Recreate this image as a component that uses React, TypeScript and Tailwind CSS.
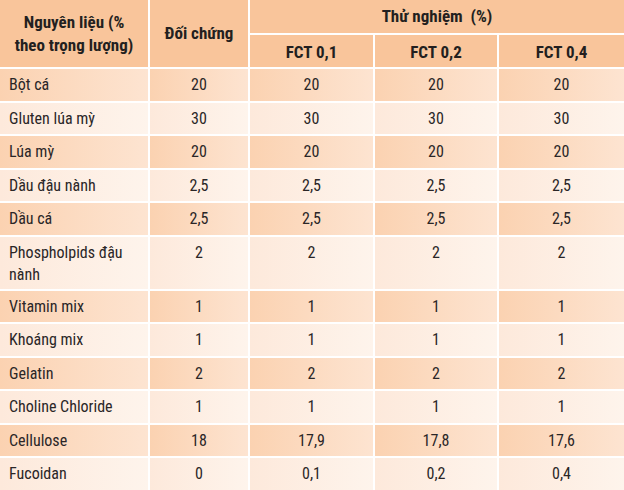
import React from 'react';

const rows: { name: string; values: string[]; tall?: boolean }[] = [
  { name: 'Bột cá', values: ['20', '20', '20', '20'] },
  { name: 'Gluten lúa mỳ', values: ['30', '30', '30', '30'] },
  { name: 'Lúa mỳ', values: ['20', '20', '20', '20'] },
  { name: 'Dầu đậu nành', values: ['2,5', '2,5', '2,5', '2,5'] },
  { name: 'Dầu cá', values: ['2,5', '2,5', '2,5', '2,5'] },
  { name: 'Phospholpids đậu nành', values: ['2', '2', '2', '2'], tall: true },
  { name: 'Vitamin mix', values: ['1', '1', '1', '1'] },
  { name: 'Khoáng mix', values: ['1', '1', '1', '1'] },
  { name: 'Gelatin', values: ['2', '2', '2', '2'] },
  { name: 'Choline Chloride', values: ['1', '1', '1', '1'] },
  { name: 'Cellulose', values: ['18', '17,9', '17,8', '17,6'] },
  { name: 'Fucoidan', values: ['0', '0,1', '0,2', '0,4'] },
];

export default function App() {
  return (
    <div className="w-[624px] h-[490px] bg-white text-[#231f20] font-['Roboto',sans-serif] font-stretch-condensed">
      {/* header */}
      <div className="grid grid-cols-[148px_98px_123px_122px_1fr] gap-[2px] grid-rows-[32.5px_32.5px] text-[17px] font-bold">
        <div className="row-span-2 bg-[#f9c59b] flex items-center justify-center text-center leading-[23px] px-2">
          Nguyên liệu (%
          <br />
          theo trọng lượng)
        </div>
        <div className="row-span-2 bg-[#f9c59b] flex items-center justify-center">Đối chứng</div>
        <div className="col-span-3 bg-[#f9c59b] flex items-center justify-center">Thử nghiệm&nbsp;&nbsp;(%)</div>
        <div className="bg-[#f9c59b] flex items-center justify-center pt-[4px]">FCT 0,1</div>
        <div className="bg-[#f9c59b] flex items-center justify-center pt-[4px]">FCT 0,2</div>
        <div className="bg-[#f9c59b] flex items-center justify-center pt-[4px]">FCT 0,4</div>
      </div>

      {/* body */}
      <div className="mt-[2px] flex flex-col gap-[2px] text-[16px] text-[#2a2627]">
        {rows.map((r, i) => {
          const cell =
            i % 2 === 0
              ? 'bg-linear-to-r from-[#fbd2b1] to-[#fde4d1]'
              : 'bg-linear-to-r from-[#fde9db] to-[#fef4ec]';
          return (
            <div
              key={r.name}
              className={`grid grid-cols-[148px_98px_123px_122px_1fr] gap-[2px] ${r.tall ? 'h-[52px]' : 'h-[31.5px]'}`}
            >
              <div className={`${cell} pl-[9px] pr-2 pt-[5px] leading-[22px]`}>
                {r.tall ? (
                  <>
                    Phospholpids đậu
                    <br />
                    nành
                  </>
                ) : (
                  r.name
                )}
              </div>
              {r.values.map((v, j) => (
                <div key={j} className={`${cell} text-center pt-[5px] leading-[22px]`}>
                  {v}
                </div>
              ))}
            </div>
          );
        })}
      </div>
    </div>
  );
}
